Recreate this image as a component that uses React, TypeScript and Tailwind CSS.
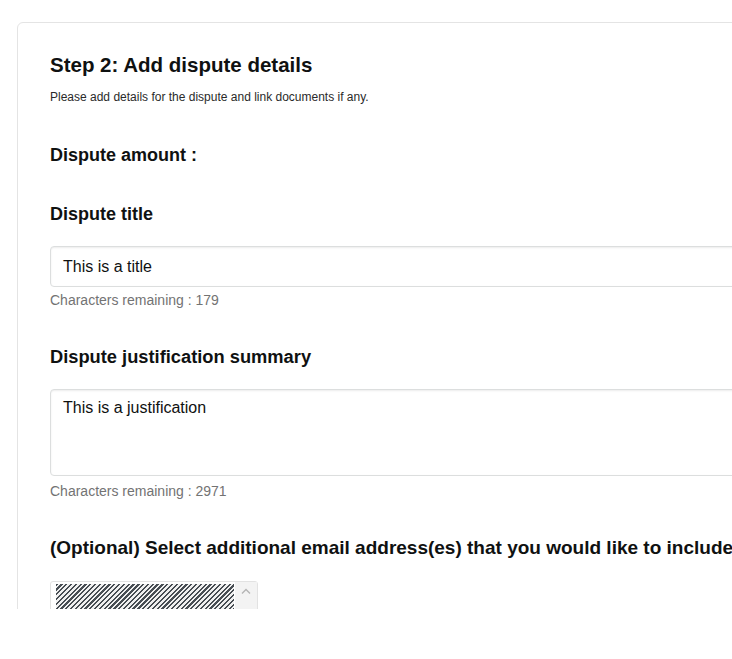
import React from 'react';

// ─── Field pieces ────────────────────────────────

function Label({
  children,
  className = '',
  size = 'text-[18px]',
}: {
  children: React.ReactNode;
  className?: string;
  size?: string;
}) {
  return (
    <h3 className={`${size} leading-[24px] font-bold text-[#0f1111] whitespace-nowrap ${className}`}>
      {children}
    </h3>
  );
}

function Hint({ children, className = '' }: { children: React.ReactNode; className?: string }) {
  return <p className={`text-[14px] leading-[20px] text-[#737373] ${className}`}>{children}</p>;
}

// ─── Main ────────────────────────────────────────

export default function App() {
  return (
    <div className="w-[732px] h-[659px] bg-white overflow-hidden font-['Liberation_Sans',Arial,sans-serif]">
      <div className="h-[609px] overflow-hidden pt-[22px] pl-[17px]">
        <div className="w-[760px] h-[640px] border border-[#e4e4e4] rounded-[6px] pt-[28px] pl-[32px]">
          <h2 className="text-[20.5px] leading-[28px] font-bold text-[#0f1111] whitespace-nowrap">
            Step 2: Add dispute details
          </h2>
          <p className="mt-[10px] text-[12px] leading-[16px] text-[#2a2a2a]">
            Please add details for the dispute and link documents if any.
          </p>

          <Label className="mt-[38px]">Dispute amount :</Label>

          {/* Title */}
          <Label className="mt-[35px]">Dispute title</Label>
          <div className="mt-[20px] h-[41px] w-[720px] border border-[#dcdede] rounded-[4px] shadow-[inset_0_1px_2px_rgba(15,17,17,0.08)] flex items-center px-[12px]">
            <span className="text-[16px] text-[#0f1111]">This is a title</span>
          </div>
          <Hint className="mt-[3px]">Characters remaining : 179</Hint>

          {/* Justification */}
          <Label className="mt-[35px]" size="text-[18.3px]">Dispute justification summary</Label>
          <div className="mt-[20px] h-[87px] w-[720px] border border-[#dcdede] rounded-[4px] shadow-[inset_0_1px_2px_rgba(15,17,17,0.08)] pt-[6px] px-[12px]">
            <span className="text-[16px] leading-[24px] text-[#0f1111]">This is a justification</span>
          </div>
          <Hint className="mt-[5px]">Characters remaining : 2971</Hint>

          {/* Email select */}
          <Label className="mt-[35px]" size="text-[19px]">
            (Optional) Select additional email address(es) that you would like to include
          </Label>
          <div className="mt-[21px] w-[208px] h-[60px] border border-[#e2e2e2] rounded-[3px] flex">
            <div className="flex-1 pt-[2px] pl-[5px]">
              <div className="h-[40px] w-[178px] bg-[image:repeating-linear-gradient(135deg,#474d53_0_1.6px,#f0f0f0_1.6px_3.4px)]" />
            </div>
            <div className="w-[22px] bg-[#f3f3f3] flex justify-center pt-[6px]">
              <svg width="10" height="7" viewBox="0 0 10 7" fill="none">
                <path d="M1 5.5L5 1.5L9 5.5" stroke="#b4b4b4" strokeWidth="1.4" />
              </svg>
            </div>
          </div>
        </div>
      </div>
    </div>
  );
}
